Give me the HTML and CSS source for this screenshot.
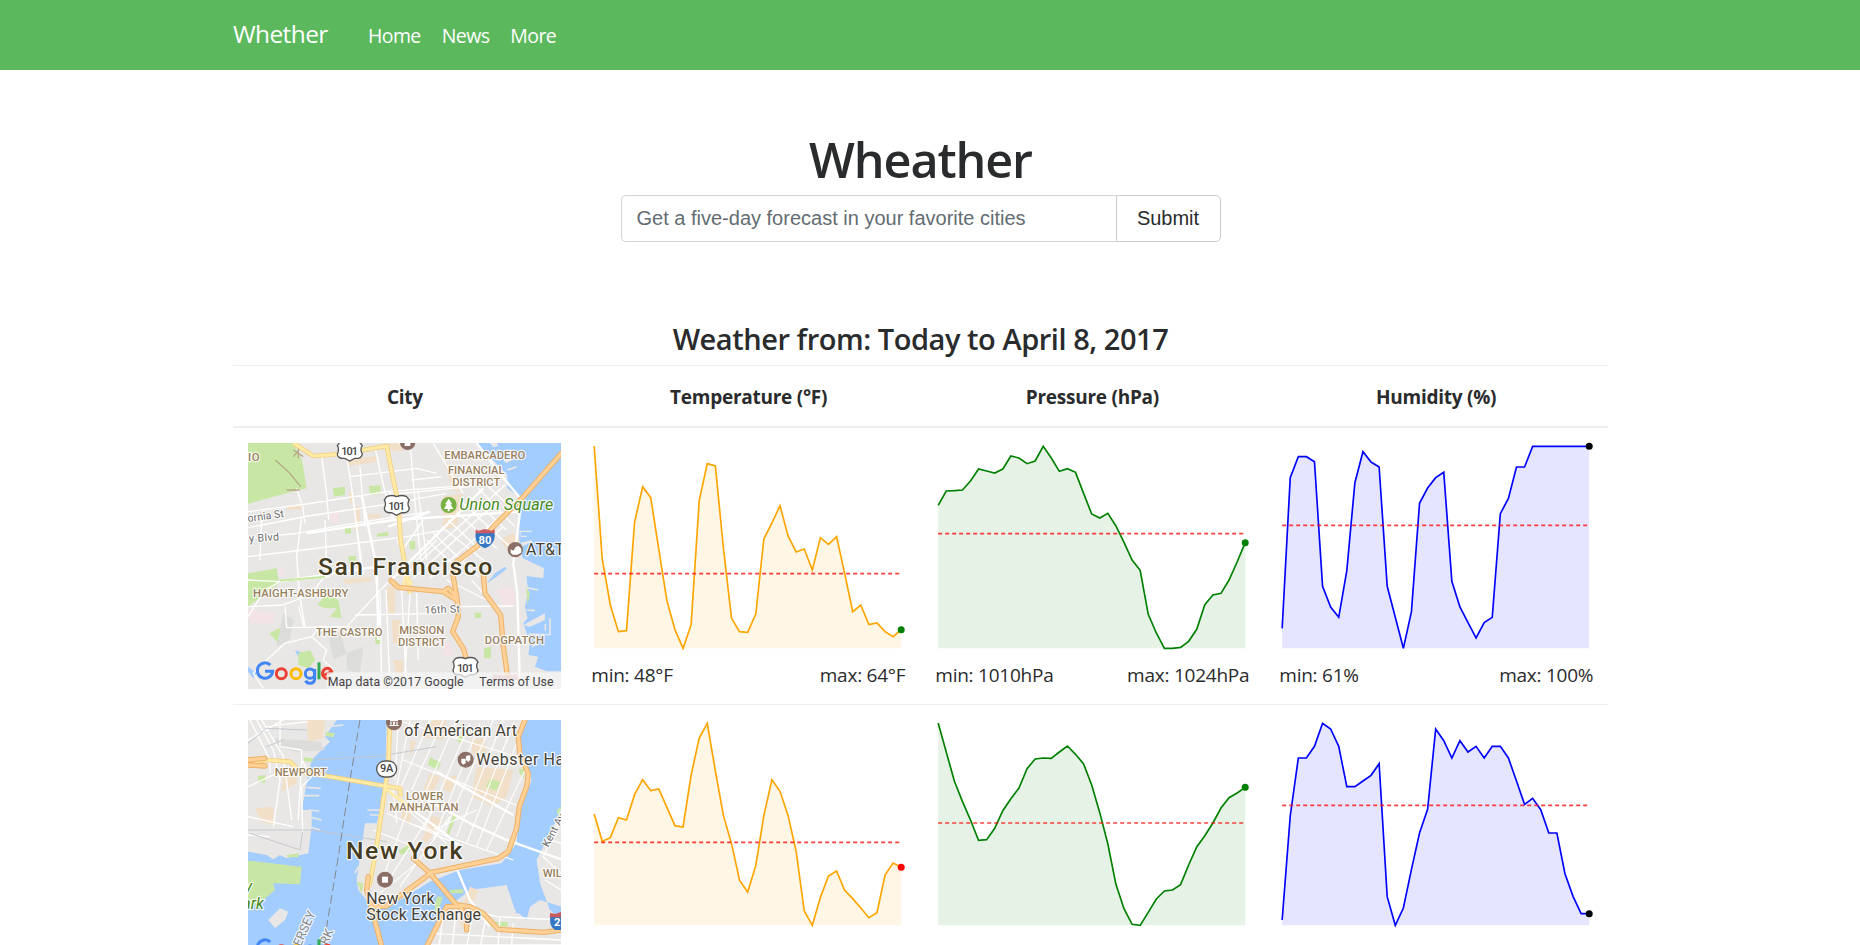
FILE: index.html
```html
<!DOCTYPE html>
<html lang="en">
<head>
<meta charset="utf-8">
<title>Whether</title>
<link rel="stylesheet" href="styles.css">
</head>
<body>
<nav class="navbar">
  <a class="brand">Whether</a>
  <a class="nav-link home">Home</a>
  <a class="nav-link news">News</a>
  <a class="nav-link more">More</a>
</nav>
<main class="container">
  <h1 class="title">Wheather</h1>
  <form class="search">
    <input class="search-input" type="text" placeholder="Get a five-day forecast in your favorite cities">
    <button class="search-button" type="button">Submit</button>
  </form>
  <h3 class="subtitle">Weather from: Today to April 8, 2017</h3>
  <section class="forecast">
    <div class="row head">
      <div class="th">City</div>
      <div class="th">Temperature (°F)</div>
      <div class="th">Pressure (hPa)</div>
      <div class="th">Humidity (%)</div>
    </div>
    <div class="row">
      <div class="cell">
        <svg class="map" viewBox="54 249 940 738">
          <rect class="land" x="54" y="249" width="940" height="738"/>
          <path class="water" d="M740 249H994V934H950L915 920L925 890L895 885L900 850L880 790L893 775L885 740L895 690L880 600L868 560V410L832 385V345Z"/>
          <path class="land" d="M868 512H905V516H872V527H890V531H872ZM872 548L905 540V545L875 560ZM870 590L942 625L940 655L890 648V690L870 670ZM880 795L945 760V780L900 800ZM895 820L960 822V826H900ZM800 249L805 258L790 262L780 249ZM820 300L860 285L862 290L828 310Z"/>
          <path class="line-land" d="M875 680L925 690M890 750L915 752M946 792V812M960 775V825M905 860L925 850M832 330L860 320"/>
          <path class="water" d="M770 670L795 640L825 620L830 626L800 650ZM54 920L80 940L70 955L54 935ZM195 870L220 880L205 892Z"/>
          <path class="park" d="M54 249H190L216 300L230 385L175 398L54 432ZM54 640L140 625L148 670L54 740ZM150 660L270 645V655L152 668ZM308 385L345 380V405L312 410ZM417 378L452 376V402L420 405ZM344 500L363 498V520L346 522ZM440 522L475 515V527L442 530ZM537 545L556 542V567L540 570ZM355 588H378V612H357ZM118 820L150 803L170 810L145 850ZM205 880L240 870L256 900L235 925L205 915ZM262 735L290 700L325 720L335 775L300 770L320 745L285 745ZM762 865L783 860V895H763ZM733 758H754V774H735ZM435 830H452V852H437ZM888 680L900 700L893 735Z"/>
          <path class="commercial" d="M350 300L440 288V305L355 318ZM170 438L215 433V448L170 450ZM375 440H392L385 510H372ZM400 465L450 462V475H400ZM335 658L420 652L425 662L350 672ZM470 680H495V760H475ZM485 780H510V850H490ZM640 410L700 400L680 500L640 510ZM640 305L675 320L690 400L670 390ZM815 535L850 520L870 545L845 580L815 550ZM475 249L515 249L520 275L480 270ZM358 395L370 393V430H360ZM490 900H520V950H500Z"/>
          <path class="medical" d="M800 690L850 680L858 735L820 738ZM54 750L135 760L130 790L60 790ZM640 850L660 850L670 885L640 890ZM300 455H325V490H300ZM145 620L160 622L162 650H148Z"/>
          <path class="hill" d="M160 760L190 780L180 840L140 860ZM290 800L330 820L350 880L310 900ZM350 880L400 860L390 940L350 930Z"/>
          <path class="street" d="M54 455L230 432L470 395L725 375M54 503L235 468L490 430L650 400M54 535L200 520L370 490L600 455M54 590L220 570L530 530L640 510M54 660L150 665L440 620M150 665L300 650M200 385L218 440L225 490M275 290L290 400L296 480M350 290L370 415L395 640M435 262L460 375L490 480M505 249L540 249L560 480L575 620M95 480L90 600M215 470L200 590L208 700L225 800M285 480L290 620M365 390L400 640M360 350L560 325L620 340M545 360L635 350M565 395L590 600M390 320L405 500M470 405L720 380M54 740L160 735L240 705L280 655M165 740L170 803L360 800M206 740L222 802M54 770L105 690L150 665M435 620L450 800M450 700L455 985M468 690L480 985M515 690L530 985M540 700L525 940M560 700L565 900M375 765L640 760M690 740L850 738M650 660L770 720M725 660L760 700M480 660L350 800L270 800L245 830L165 850L110 900L70 940L100 985M245 830L290 870L280 900L310 930"/>
          <path class="street wide" d="M478 665L600 545L760 385M150 665L440 620M740 249L830 365L875 420L850 610L862 700L870 985M230 520L490 480L870 455M480 395L490 480M395 405L440 620L445 840M475 500L600 455"/>
          <path class="street" d="M520 650L825 375M550 655L790 435M600 655L815 465M640 650L820 500M590 540L700 640M610 520L745 650M635 500L785 620M655 480L750 570M680 455L800 565M700 430L840 560M720 410L830 510M745 385L855 500M765 370L860 460M620 540L560 600M500 540L520 570M580 480L510 580M610 250L700 400"/>
          <path class="trail" d="M136 300L175 335L212 380M190 270L220 290M210 265L190 290M205 260V295M170 390H208"/>
          <path class="highway-edge" d="M190 249L250 288L330 282L470 258L488 350L505 430L512 540L540 700"/>
          <path class="yellow" d="M190 249L250 288L330 282L470 258L488 350L505 430L512 540L540 700M520 675L530 640L545 675"/>
          <path class="motor-edge" d="M994 280L880 410L795 495L740 560L680 605L668 640L682 720L685 770L668 815L700 865L710 900M483 662L505 682L640 695L680 720M640 695L655 685L675 705M760 645L765 700L812 765L820 860L832 945"/>
          <path class="motor" d="M994 280L880 410L795 495L740 560L680 605L668 640L682 720L685 770L668 815L700 865L710 900M483 662L505 682L640 695L680 720M640 695L655 685L675 705M760 645L765 700L812 765L820 860L832 945"/>
          <path class="park-line" d="M150 662L285 650"/>
          <g id="us101"><path class="shield" d="M470 410Q485 403 500 410Q515 403 530 410L538 420Q530 430 538 445Q535 460 515 458L500 466L485 458Q464 460 463 445Q470 430 463 420Z"/><text class="route" x="500" y="449" textLength="50">101</text></g>
          <use href="#us101" x="-141" y="-163"/>
          <use href="#us101" x="206" y="486"/>
          <path class="inter" d="M738 515H793Q800 550 765 565Q730 550 738 515Z"/><path class="inter-top" d="M738 508L745 512L765 507L785 512L793 508L795 520H736Z"/>
          <text class="inter-text" x="765" y="552">80</text>
          <path class="inter-top" opacity=".5" d="M790 943L825 948L862 943L866 960H786Z"/>
          <circle class="poi" cx="533" cy="247" r="23"/><path d="M524 249H541V258H524Z" fill="#fff"/>
          <circle cx="656" cy="435" r="24" fill="#78b043"/><path d="M656 416L667 433H662L670 447H659V454H653V447H642L650 433H645Z" fill="#fff"/>
          <circle class="poi" cx="856" cy="569" r="23"/><path d="M842 568L850 572L858 560L866 558L874 566V578L862 584H848L842 578Z" fill="#fff"/>
          <text class="area" x="54" y="302" textLength="35">IO</text>
          <text class="area" x="643" y="296" textLength="243">EMBARCADERO</text>
          <text class="area" x="654" y="342" textLength="170">FINANCIAL</text>
          <text class="area" x="667" y="377" textLength="144">DISTRICT</text>
          <text class="area" x="69" y="711" textLength="286">HAIGHT-ASHBURY</text>
          <text class="area" x="258" y="827" textLength="200">THE CASTRO</text>
          <text class="area" x="508" y="823" textLength="135">MISSION</text>
          <text class="area" x="504" y="858" textLength="144">DISTRICT</text>
          <text class="area" x="764" y="852" textLength="178">DOGPATCH</text>
          <text class="road" x="54" y="486" textLength="110" transform="rotate(-8 54 486)">ornia St</text>
          <text class="road" x="58" y="547" textLength="90" transform="rotate(-4 58 547)">y Blvd</text>
          <text class="road" x="584" y="761" textLength="106" transform="rotate(-2 584 761)">16th St</text>
          <text class="place green" x="688" y="450" textLength="282">Union Square</text>
          <text class="place" x="888" y="585">AT&amp;T</text>
          <text class="city" x="264" y="645" textLength="523">San Francisco</text>
          <g id="glogo" class="glogo">
            <path stroke="#4285f4" d="M121 915A23 23 0 1 0 128 934H105"/>
            <circle stroke="#ea4335" cx="154" cy="941" r="15"/><circle stroke="#fbbc05" cx="198" cy="941" r="15"/>
            <path stroke="#4285f4" d="M254 927V958Q252 971 239 970Q230 969 227 962"/><circle stroke="#4285f4" cx="240" cy="941" r="14"/>
            <path stroke="#34a853" d="M267 907V958"/><path stroke="#ea4335" d="M280 947L305 935Q299 922 287 926Q276 932 278 945Q284 961 304 952"/>
          </g>
          <rect x="290" y="937" width="704" height="50" fill="#f5f5f5" opacity=".75"/>
          <text class="credit" x="293" y="978" textLength="408">Map data ©2017 Google</text>
          <text class="credit" x="748" y="978" textLength="223">Terms of Use</text>
        </svg>
      </div>
      <div class="cell"><svg class="chart" data-chart="sfTemp"></svg><div class="range"><span>min: 48°F</span><span>max: 64°F</span></div></div>
      <div class="cell"><svg class="chart" data-chart="sfPres"></svg><div class="range"><span>min: 1010hPa</span><span>max: 1024hPa</span></div></div>
      <div class="cell"><svg class="chart" data-chart="sfHum"></svg><div class="range"><span>min: 61%</span><span>max: 100%</span></div></div>
    </div>
    <div class="row">
      <div class="cell">
        <svg class="map" viewBox="54 60 940 738">
          <rect class="water" x="54" y="60" width="940" height="738"/>
          <path class="land" d="M54 60H320L285 110L300 125L245 180L230 250L215 330H245V380L235 460L170 475L150 465L130 478L110 465L54 455ZM470 60H880L862 130L890 190L905 240L865 350L860 430L815 490L690 510L600 545L510 600L430 625L385 570L380 540L405 370L440 370L465 260ZM994 330L950 420L920 480L930 550L960 630L994 660V798H580L630 640L720 570L830 555L855 630L890 660L900 620L930 600L994 620ZM115 660L150 625L175 635L165 660L135 685Z"/>
          <path class="line-land" d="M215 287H268M230 262L272 265M235 330L268 333M235 350L275 360M240 380L270 390M412 330H450M420 345H448M235 210L280 215M295 80L340 75M375 520L385 500"/>
          <path class="water-line" d="M870 510L900 550M885 505L910 560M845 530L880 590M880 590L860 640M860 600L900 590"/>
          <path class="park" d="M54 482L215 500L210 553L130 550L135 570L100 600L54 625ZM285 95L315 100L310 112L288 108ZM220 172L248 175V186L222 184ZM84 228L107 226L105 248L84 246ZM600 172L634 188L622 208L594 195ZM780 236L810 245L800 272L768 262ZM690 105L704 112L692 130L680 122ZM868 205L886 210L880 236L867 215ZM505 452L535 435L540 450L515 465ZM672 338L678 350L655 410L648 405ZM380 545L400 550L395 580ZM620 590L638 590L625 640L612 640ZM775 665H833V680H778ZM660 570L700 568V580H662ZM980 330L994 320V350L985 350ZM170 465L205 460V472H172ZM860 690H890L895 705Z"/>
          <path class="commercial" d="M230 60H285L278 115L235 125ZM160 220L200 210V250L155 275ZM75 325L130 320V375L95 365ZM610 60L650 62L640 120L570 110ZM720 120L760 115L770 160L730 165ZM600 220L630 230L610 275L580 270ZM640 235L680 225L665 275L640 270ZM740 200L850 210L830 290L790 320L725 290ZM515 310L550 305L540 370L515 360ZM605 345L640 360L590 430L575 420ZM720 560L745 570L735 600L700 610ZM680 650L720 650L700 690ZM540 120L560 125L540 170Z"/>
          <path class="park" d="M780 236L810 245L800 272L768 262Z"/>
          <path class="hill" d="M135 115L270 125L285 150L200 155L140 140Z"/>
          <path class="street" d="M60 60L120 180L120 220M80 60L130 150L150 240L130 380M95 60L160 170L185 360M54 120L160 60M150 60V140L215 150V180L205 360M215 180L245 230L215 260L218 400M54 260L140 220L200 215M54 350L190 380M54 405L120 410M105 80L235 65"/>
          <path class="street thin" d="M505 60L495 240M540 60L500 260M600 60L505 280M640 60L545 270M680 60L560 340M720 70L580 390M750 70L610 420M790 60L640 400M820 60L680 410M850 70L710 430M860 130L740 440M890 200L770 450M520 180L870 320M500 60L860 170M540 370L850 480M510 310L650 430M470 340L700 440M430 390L600 460M545 300L460 530M610 330L470 550M660 350L510 560M490 270L500 370M610 390L740 330M560 490L450 580"/>
          <path class="street" d="M640 640L620 798M680 620L660 798M730 630L700 798M770 640L740 798M810 650L800 798M850 670L840 798M600 700L994 720M590 735H994M994 350L940 470L994 520M960 420L994 430M945 540L994 570M690 620L800 650L994 660"/>
          <path class="street wide" d="M465 262L550 330L650 405L690 440M565 285L720 370L830 420L994 478M620 215L850 345M680 505L720 600L780 680"/>
          <path class="tunnel" d="M250 180L450 168L620 140M54 390L250 390L470 425M60 400L210 450L218 395M54 130L110 85L230 90M160 120L110 140"/>
          <path class="dash" d="M390 60L360 240L325 470L290 680L260 798"/>
          <path class="highway-edge" d="M54 190L110 180L180 185L210 215L300 230L465 258L510 265L512 290M480 60L475 200L465 265L440 440L418 560"/>
          <path class="yellow" d="M54 190L110 180L180 185L210 215L300 230L465 258L510 265L512 290M480 60L475 200L465 265L440 440L418 560M465 265L530 315"/>
          <path class="motor-edge" d="M54 180L105 175M54 195L105 198M885 60L865 110L870 165L895 220L890 260L868 320L860 385L835 455L805 475L605 517L520 580L470 618L425 620L410 570L415 530M418 600L450 720L470 798M550 475L600 520L680 615L720 620L760 640L805 688L940 697L994 690M710 690V650L690 620L650 620L590 740L575 798"/>
          <path class="motor" d="M54 180L105 175M54 195L105 198M885 60L865 110L870 165L895 220L890 260L868 320L860 385L835 455L805 475L605 517L520 580L470 618L425 620L410 570L415 530M418 600L450 720L470 798M550 475L600 520L680 615L720 620L760 640L805 688L940 697L994 690M710 690V650L690 620L650 620L590 740L575 798"/>
          <rect class="shield" x="440" y="183" width="60" height="48" rx="24"/><text class="route" x="470" y="217">9A</text>
          <path class="inter" d="M961 650H1020V690H975Q957 680 961 650Z"/><path class="inter-top" d="M961 638L975 642L994 636V652H959Z"/><text class="inter-text" x="982" y="679">2</text>
          <circle class="poi" cx="492" cy="67" r="24"/><path d="M480 60H504V64H480ZM481 66H485V74H481ZM489 66H495V74H489ZM499 66H503V74H499ZM478 75H506V78H478Z" fill="#fff"/>
          <circle class="poi" cx="707" cy="179" r="24"/><path d="M694 176H707V190L700 194L694 188ZM708 168L721 165V180L715 186L708 180Z" fill="#fff"/>
          <circle class="poi" cx="465" cy="539" r="24"/><rect x="456" y="530" width="18" height="18" fill="#fff"/>
          <text class="area" x="134" y="228" textLength="157">NEWPORT</text>
          <text class="area" x="528" y="300" textLength="112">LOWER</text>
          <text class="area" x="478" y="334" textLength="208">MANHATTAN</text>
          <text class="area" x="938" y="531">WILL</text>
          <text class="road" x="955" y="443" transform="rotate(-62 955 443)">Kent Ave</text>
          <text class="road big" x="212" y="742" transform="rotate(-66 212 742)">ERSEY</text>
          <text class="road big" x="292" y="737" transform="rotate(-66 292 737)">RK</text>
          <text class="place" x="674" y="60">y</text>
          <text class="place" x="523" y="107" textLength="338">of American Art</text>
          <text class="place" x="739" y="194" textLength="290">Webster Hall</text>
          <text class="place" x="409" y="611" textLength="205">New York</text>
          <text class="place" x="409" y="659" textLength="344">Stock Exchange</text>
          <text class="place green" x="44" y="575">y</text>
          <text class="place green" x="37" y="627">ark</text>
          <text class="city" x="348" y="476" textLength="349">New York</text>
          <use href="#glogo" y="-189"/>
        </svg>
      </div>
      <div class="cell"><svg class="chart" data-chart="nyTemp"></svg><div class="range"><span>min: 39°F</span><span>max: 56°F</span></div></div>
      <div class="cell"><svg class="chart" data-chart="nyPres"></svg><div class="range"><span>min: 1002hPa</span><span>max: 1030hPa</span></div></div>
      <div class="cell"><svg class="chart" data-chart="nyHum"></svg><div class="range"><span>min: 65%</span><span>max: 100%</span></div></div>
    </div>
  </section>
</main>
<script src="charts.js"></script>
</body>
</html>
```
FILE: styles.css
```css
* { box-sizing: border-box; }
html { overflow: hidden; height: 945px; }
body { margin: 0; height: 945px; overflow: hidden; background: #fff; color: #292b2c; font: 19px/30px "Open Sans", "Noto Sans", sans-serif; }
.navbar { height: 70px; padding: 0 0 0 233px; background: #5cb85c; color: #fff; display: flex; align-items: baseline; line-height: 68px; }
.brand { font-size: 24.5px; width: 135px; letter-spacing: -0.6px; }
.nav-link { font-size: 19.5px; margin-right: 21px; letter-spacing: -0.6px; }
.container { width: 1375px; margin-left: 233px; padding-top: 62px; }
.title { margin: 0; font-size: 48.5px; line-height: 55px; font-weight: 600; text-align: center; height: 63px; letter-spacing: -1.1px; }
.search { width: 600px; height: 47px; margin: 0 auto; display: flex; font-family: "Liberation Sans", Arial, sans-serif; }
.search-input { flex: 1; min-width: 0; border: 1px solid #d3d4d5; border-right: 0; border-radius: 5px 0 0 5px; padding: 0 15px; font: 20px "Liberation Sans", Arial, sans-serif; color: #464a4c; outline: 0; }
.search-input::placeholder { color: #636c72; opacity: 1; }
.search-button { width: 105px; border: 1px solid #ccc; border-radius: 0 5px 5px 0; background: #fff; color: #292b2c; font: 20px "Liberation Sans", Arial, sans-serif; padding: 0; }
.subtitle { margin: 79px 0 0; height: 44px; font-size: 29px; line-height: 36px; font-weight: 600; text-align: center; letter-spacing: -0.45px; }
.row { display: grid; grid-template-columns: repeat(4, 1fr); border-top: 1px solid #eceeef; }
.head { height: 63px; border-bottom: 2px solid #eceeef; }
.head + .row { border-top: 0; }
.th { text-align: center; font-weight: 700; padding-top: 16px; font-size: 19px; letter-spacing: -0.25px; }
.cell { height: 276px; padding: 15px; }
.map { display: block; width: 313.3px; height: 246px; font-family: Roboto, sans-serif; }
.chart { display: block; width: 314px; height: 217px; overflow: visible; }
.range { display: flex; justify-content: space-between; letter-spacing: -0.24px; }

.chart-area { opacity: .1; }
.chart-line { fill: none; stroke-width: 5; }
.chart-mean { stroke: red; stroke-opacity: .75; stroke-width: 5; stroke-dasharray: 12 9; }

.land { fill: #e9e7e5; }
.water { fill: #a3ccff; }
.park { fill: #c9e7a4; }
.commercial { fill: #f1dfc8; }
.medical { fill: #f3e3e6; }
.hill { fill: #dcdcda; }
.street, .line-land, .trail, .highway-edge, .yellow, .motor-edge, .motor, .park-line, .tunnel, .dash, .water-line { fill: none; stroke-linejoin: round; }
.street { stroke: #fff; stroke-width: 4; }
.thin { stroke-width: 3.4; }
.wide { stroke-width: 7; }
.line-land { stroke: #e9e7e5; stroke-width: 5; }
.water-line { stroke: #a3ccff; stroke-width: 8; }
.trail { stroke: #b5a888; stroke-width: 4; }
.park-line { stroke: #c9e7a4; stroke-width: 6; }
.highway-edge { stroke: #f2cf80; stroke-width: 14; }
.yellow { stroke: #ffeba6; stroke-width: 9; }
.motor-edge { stroke: #eeb066; stroke-width: 16; stroke-linecap: round; }
.motor { stroke: #ffd197; stroke-width: 10; stroke-linecap: round; }
.tunnel { stroke: #c5c9cf; stroke-width: 3; }
.dash { stroke: #84898f; stroke-width: 3; stroke-dasharray: 26 12; }
.shield { fill: #fff; stroke: #555; stroke-width: 4; }
.route { font-size: 33px; text-anchor: middle; fill: #444; font-weight: 500; }
.inter { fill: #3677c4; }
.inter-top { fill: #ca5b62; }
.inter-text { font-size: 34px; font-weight: 700; fill: #fff; text-anchor: middle; }
.poi { fill: #8b6f67; }
.area, .road, .place, .city { paint-order: stroke; stroke: #fff; stroke-opacity: .85; stroke-width: 7; stroke-linejoin: round; }
.area { font-size: 34px; font-weight: 500; fill: #98805f; }
.road { font-size: 32px; fill: #6b6b6b; }
.big { font-size: 38px; fill: #888; }
.place { font-size: 48px; fill: #454036; }
.green { fill: #458a18; font-style: italic; }
.city { font-size: 74px; font-weight: 500; fill: #463c22; }
.credit { font-size: 37px; fill: #444; }
.glogo { fill: none; stroke-width: 9; }
```
FILE: charts.js
```js
// Sparkline samples: distance of each reading from the top of the plot.
const charts = {
  sfTemp: { color: 'orange', dot: 'green', top: 39, mean: 431, y: [48,387,525,605,602,277,170,203,358,512,599,655,584,212,101,108,355,565,605,607,552,327,279,227,318,366,357,420,323,343,320,430,545,525,584,579,605,620,599] },
  sfPres: { color: 'green', dot: 'green', top: 39, mean: 311, y: [226,183,182,180,153,117,123,129,117,78,84,101,93,49,84,124,116,127,190,252,264,250,288,337,390,421,553,609,655,655,652,634,598,524,495,490,450,396,338] },
  sfHum: { color: 'blue', dot: 'black', top: 39, mean: 286, y: [595,143,80,80,95,469,531,562,422,158,65,96,111,469,562,655,545,220,174,143,127,454,531,578,624,578,562,251,205,111,111,49,49,49,49,49,49,49,49] },
  nyTemp: { color: 'orange', dot: 'red', top: 60, mean: 427, y: [342,424,413,353,360,284,239,272,267,322,377,381,225,114,70,213,347,431,541,576,497,347,239,274,347,454,633,676,592,528,513,571,596,624,653,638,525,489,502] },
  nyPres: { color: 'green', dot: 'green', top: 60, mean: 369, y: [69,156,243,304,360,421,419,385,332,296,264,206,177,174,175,156,138,163,192,255,338,432,553,626,673,676,637,597,573,570,554,495,441,407,369,324,293,279,262] },
  nyHum: { color: 'blue', dot: 'black', top: 60, mean: 316, y: [660,348,174,174,139,70,87,139,260,260,243,226,191,590,676,624,508,399,328,87,122,174,122,156,139,174,139,139,174,243,313,295,329,399,399,521,589,641,641] }
};
const STEP = 24.24, LEFT = 9.5, BASE = 616;
document.querySelectorAll('[data-chart]').forEach(svg => {
  const c = charts[svg.dataset.chart];
  const pts = c.y.map((v, i) => [LEFT + i * STEP, v - c.top]);
  const right = pts[pts.length - 1];
  const line = pts.map(p => p.join(',')).join(' ');
  svg.setAttribute('viewBox', '0 0 942 651');
  svg.innerHTML =
    `<polygon class="chart-area" fill="${c.color}" points="${LEFT},${BASE} ${line} ${right[0]},${BASE}"/>` +
    `<polyline class="chart-line" stroke="${c.color}" points="${line}"/>` +
    `<line class="chart-mean" x1="${LEFT}" x2="${right[0]}" y1="${c.mean - c.top}" y2="${c.mean - c.top}"/>` +
    `<circle cx="${right[0]}" cy="${right[1]}" r="10.5" fill="${c.dot}"/>`;
});
```
